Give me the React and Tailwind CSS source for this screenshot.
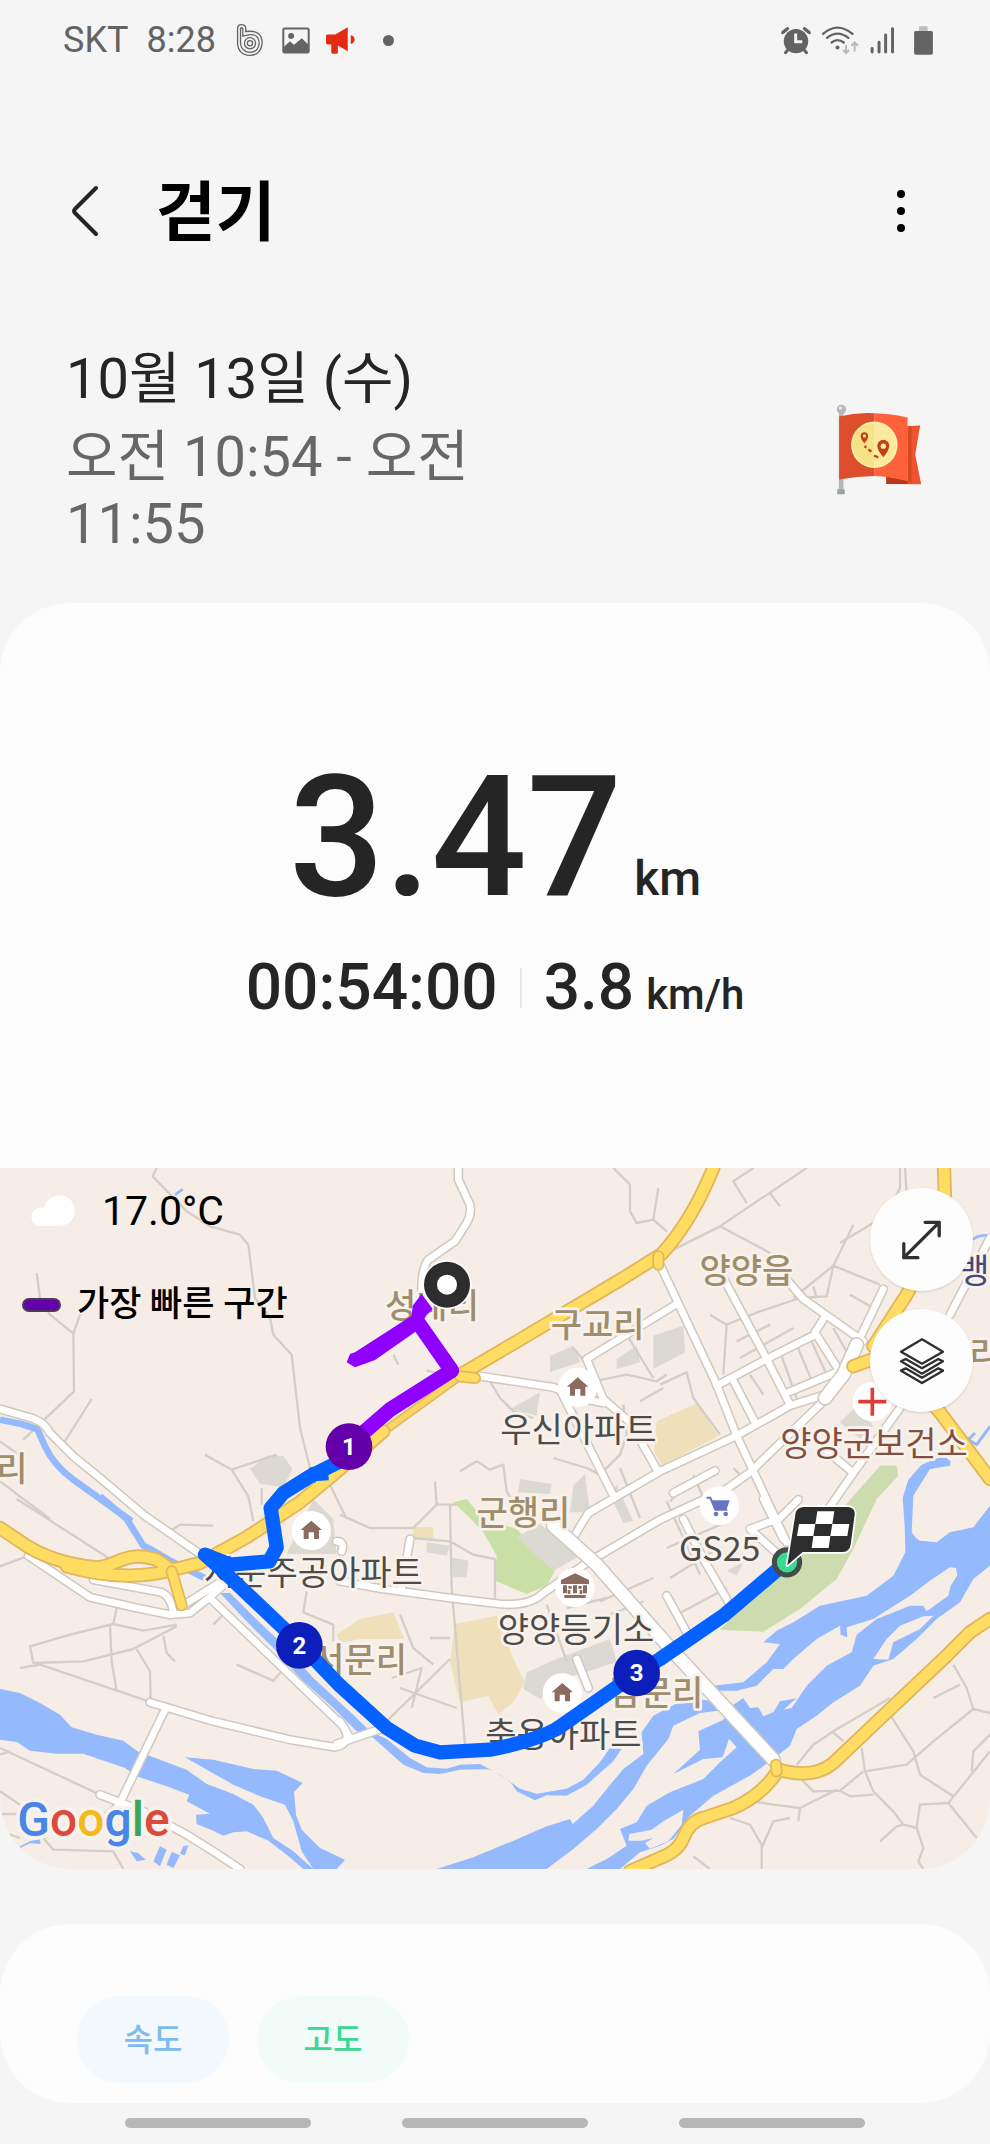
import React from 'react';

const WATER = [
  'M0 1563L60 1575 120 1605 180 1640 215 1678 290 1700 370 1718 412 1750 480 1775 560 1805 620 1848 700 1878 760 1910 790 1950 820 2010 880 2050 940 2103H910L860 2060 805 2018 740 1990 700 1993 670 2003 640 1988 590 1968 588 1940 630 1937 560 1900 568 1880 500 1855 410 1825 375 1800 250 1757 170 1757 90 1748 50 1722 0 1715Z',
  'M555 1768L640 1775 760 1803 830 1808 908 1845 882 1872 888 1940 905 1985 960 2040 1035 2075 1010 2103H940L905 2050 880 1960 855 1910 780 1885 700 1850 620 1805Z',
  'M660 1275L690 1275 760 1345 860 1440 940 1530 1060 1640 1110 1690 1160 1713 1230 1770 1280 1798 1340 1802 1380 1790 1440 1788 1500 1820 1560 1862 1610 1877 1700 1862 1750 1835 1800 1783 1840 1725 1900 1690 1840 1780 1760 1850 1700 1883 1640 1882 1605 1897 1550 1870 1530 1840 1470 1803 1380 1805 1320 1818 1270 1815 1210 1790 1120 1710 1070 1690 1000 1620 900 1530 820 1440 730 1350Z',
  'M1310 2103L1420 2068 1540 2018 1640 1975 1710 1953 1718 1968 1780 1913 1820 1863 1870 1803 1930 1758 1925 1693 1960 1643 2060 1590 2150 1600 2200 1622 2100 1635 2020 1673 2005 1713 1940 1793 1900 1863 1850 1923 1790 1983 1720 2043 1640 2103Z',
  'M1760 2103L1820 2073 1880 2033 1860 1983 1910 1963 1940 1913 2010 1873 2110 1833 2160 1783 2210 1738 2187 1712 2168 1768 2110 1773 2020 1818 2100 1745 2095 1690 2170 1655 2200 1610 2230 1590 2250 1620 2275 1618 2290 1645 2320 1633 2340 1600 2390 1591 2350 1625 2375 1620 2420 1553 2480 1493 2555 1453 2570 1400 2630 1353 2730 1313 2770 1313 2780 1330 2845 1283 2852 1253 2872 1222 2868 1200 2850 1198 2790 1238 2730 1283 2620 1353 2540 1378 2542 1408 2522 1400 2520 1373 2450 1413 2380 1473 2350 1503 2320 1503 2270 1553 2210 1568 2140 1568V1553L2230 1543 2300 1483 2340 1428 2290 1423 2330 1388 2380 1363 2460 1313 2600 1283 2680 1223 2716 1153 2714 1073 2708 990 2725 935 2765 890 2830 863 2852 880 2850 893 2790 903 2740 983 2735 1093 2748 1110 2760 1118 2810 1123 2850 1093 2920 1078 2970 1013V1193L2920 1233 2880 1303 2810 1353 2750 1413 2680 1473 2620 1493 2580 1553 2500 1603 2450 1643 2390 1683 2370 1733 2320 1773 2250 1823 2140 1883 2070 1943 2020 2013 1980 2033 1920 2053 1860 2103Z',
  'M60 2035L90 2020 120 2012 122 2028 90 2026 60 2040Z',
  'M390 2050L415 2055 437 2075 410 2080Z',
  'M480 2035L500 2045 480 2095 460 2080ZM500 2090L515 2052 540 2062 520 2100ZM550 2035L565 2032 555 2062 540 2058Z',
];

const ISLANDS = [
  'M2620 1473L2660 1413 2700 1373 2770 1345 2800 1343 2760 1383 2680 1423 2665 1475Z',
  'M1885 2018L1888 1998 1955 1985 1990 1960 2050 1925 2045 1970 2005 2020 1950 2042 1935 2025 1960 2010 1925 2018Z',
];

const AREAS = [
  { color: '#cddcae', d: 'M2500 1053L2640 893H2690L2695 923 2630 993 2560 1143 2510 1233 2400 1323 2290 1391 2160 1385 2330 1220Z' },
  { color: '#c8dfa6', d: 'M1360 1003L1400 993 1450 1053 1550 1083 1665 1208 1640 1253 1580 1278 1485 1238 1490 1163 1450 1093 1410 1050Z' },
  { color: '#efdfba', d: 'M1970 760L2090 706 2155 805 1985 893 1962 850Z' },
  { color: '#efdfba', d: 'M1365 1368L1490 1343 1540 1473 1575 1543 1540 1603 1495 1640 1465 1583 1380 1603 1350 1483Z' },
  { color: '#efdfba', d: 'M1010 1400L1080 1353 1180 1333 1212 1413 1080 1413 1020 1425Z' },
  { color: '#efdfba', d: 'M1242 1077L1300 1078V1118L1235 1113Z' },
  { color: '#dcd9d3', d: 'M750 903L800 863H850L877 903 850 958 780 948Z' },
  { color: '#dcd9d3', d: 'M940 993L1000 1053 1010 1158 860 1158Z' },
  { color: '#dcd9d3', d: 'M1650 563L1720 533 1740 583 1650 613ZM1530 723L1620 673 1610 743ZM1960 503L2050 473 2055 553 1960 603ZM1850 573L1910 533 1920 583 1850 603ZM1560 933L1655 948 1650 978 1555 973ZM1720 953L1755 918 1770 1033H1710Z' },
  { color: '#dcd9d3', d: 'M2520 763L2570 713 2620 773 2580 813ZM1550 1108L1620 1068 1740 1163 1660 1208ZM1580 1513L1670 1473 1830 1413 1850 1483 1720 1523 1620 1593 1570 1563ZM1280 1123L1350 1133 1340 1163 1280 1153ZM1350 1168L1405 1178 1400 1228 1360 1228ZM2180 1208L2230 1183 2210 1223ZM1850 950L1900 1060 1870 1065 1830 980Z' },
];

const LANES = [
  'M470 0L458 25 560 130 630 175 720 200 745 230 760 350 765 390 810 450 820 500 875 560 900 780 930 900',
  'M110 315L120 390 150 440 220 497 222 670 70 815M220 497L240 440M275 693L185 835M0 820L70 870M0 940L150 1053',
  'M615 860L695 905 830 860M695 905L745 985 760 1060M785 960L785 1010M990 950L1040 1053',
  'M50 993L330 1173M0 1195L80 1165M510 1090L540 1070 640 1073',
  'M350 1320L340 1368 430 1388 530 1370M340 1368L210 1400 90 1435 100 1485 250 1480 400 1443 530 1375M330 1370L335 1480 350 1570M410 1443L450 1510 452 1593M490 1403L500 1455 525 1480M60 1500L120 1490 440 1598',
  'M0 1740L300 1880M0 1760L30 1750M0 1870L60 1910M0 1938H60M130 2010L160 2045 340 2050 370 2103M0 1990L60 2010',
  'M710 1490L820 1538 845 1510M640 1370L670 1340M920 1270L910 1333 1000 1370 1000 1420',
  'M1840 0L1890 50 1890 130 1910 165 1960 155 1975 60M1960 155L2000 190M1180 560L1195 590M1280 607L1400 640M1470 640L1500 690 1540 730 1600 750',
  'M1380 910L1430 880 1470 905 1510 890 1520 970 1560 1040M1020 1040L1110 1080 1240 1080 1310 1010 1370 1010M1305 940L1310 1010M1350 1010L1355 1260 1395 1730M1240 1110L1350 1120 1420 1160 1485 1173 1485 1293M1290 1410L1350 1410M1160 1660L1350 1473M1200 1340L1240 1440 1300 1490M1200 1560L1370 1620M1175 1530L1265 1500 1235 1620M1660 870L1760 900 1800 920 1860 860 1880 800 1870 710',
  'M1780 640L1880 620 1970 640 2000 620M1880 500L1960 630M1920 700L1990 660M1860 900L1920 1050M2000 1000L2100 1220M1720 540L1760 590',
  'M2020 245L2160 175 2420 0M2260 0L2200 40 2240 105M2160 175L2320 260M2310 75L2340 115M2700 0L2700 60 2660 140 2520 225M2715 0L2720 80M2500 293L2560 170',
  'M2380 390L2500 293 2640 350M2500 293L2480 385 2400 390 2280 430 2180 470 2130 440M2180 470L2170 620M2210 520L2310 470M2220 570L2380 480M2550 380L2620 420M2440 355L2450 390M2250 620L2290 680M2340 550L2390 690M2390 530L2440 650M2430 510L2480 620M2500 480L2550 570',
  'M1980 650L2060 613 2080 690 2160 800M2010 1000L2060 950M2080 920L2110 990M2200 900L2230 930M2000 1140L2200 1053M2010 1230L2140 1150M2030 1340L2180 1260M1800 1300L1960 1230M1700 1320L1820 1290M1830 1340L1930 1300M1640 1310L1700 1480',
  'M2390 1790L2440 1730 2500 1690 2670 1590M2500 1693L2530 1720M2585 1740L2595 1810 2720 1790 2800 1720 2920 1623 2970 1635M2400 1830L2440 1870 2520 1868 2590 1810M2595 1810L2620 1870 2680 1930 2710 1970 2690 1975 2640 2020M2710 1970L2750 1980 2760 1910 2845 1905 2970 1750M2520 1868L2550 1885 2620 1880M2670 1640L2740 1750 2760 1820 2860 1885M2845 1905L2930 2010',
  'M2260 1900L2320 1910 2400 1920 2510 1865M2190 1950L2250 1970 2285 2030V2103M2370 1950L2320 1960 2285 2040M2860 1490L2900 1560 2920 1623M2800 1590L2880 1550M2750 1980L2770 2040 2755 2080 2770 2103M2970 1700L2920 1750 2915 1810M2080 2065L2130 2103M2400 1920L2395 1960',
];

const STREETS = [
  'M0 723L100 752Q135 765 150 795L220 865 300 930 430 1040 600 1158 690 1205',
  'M85 1163L270 1288 400 1318 510 1340 570 1335 620 1295 690 1235',
  'M280 1235L480 1272Q510 1280 518 1325M555 1308L660 1243',
  'M630 1290L1030 1675Q1060 1725 1005 1738L870 1715 640 1660 450 1603M495 1625L355 1915 320 1945',
  'M300 1880L430 1930 560 2000 640 2050 720 2103',
  'M1010 1728L1150 1680M1020 1660L1050 1710',
  'M1375 0V35L1410 110Q1415 140 1400 165L1365 220 1285 275Q1265 300 1265 370',
  'M1430 623L1660 658 1740 690 1810 705M1680 665L1840 983',
  'M1980 290L2150 650 2210 803 2360 1123M2030 408L1760 573 1810 693 1890 763 1970 903',
  'M1725 1100L1765 1035 1980 910 2210 803 2370 713 2490 675',
  'M2170 330L2300 573 2370 710M2360 335L2410 393 2590 520M2470 453L2445 493 2520 613M2150 653L2300 573 2445 500M2200 638L2265 763M2360 675L2515 610',
  'M2650 363L2530 613M2480 690L2250 913 2180 963 1980 1055 1760 1185 1630 1275Q1590 1315 1500 1308L1350 1290 1150 1263 1020 1240',
  'M2050 1053L2110 1173 2190 1310M2000 1283L2060 1393M2290 993L2350 1113M2250 1083L2350 1173M2250 1083L2340 1050 2395 995',
  'M2470 840L2560 915 2480 1030M2560 915L2700 720M2970 210L2850 440M2020 975L2145 908M1230 1113L1205 1260M1730 1473L1765 1560M1010 1120Q1035 1120 1025 1150',
];

const HIGHWAYS = [
  'M0 1080L60 1120Q150 1185 290 1198C350 1195 380 1145 470 1175L520 1210',
  'M200 1195Q380 1245 520 1205L600 1185 740 1108 900 1003 1020 903 1150 790',
  'M1390 615L1560 515 1870 330 1985 258Q2075 160 2140 0',
  'M2832 0L2835 93 2790 250 2720 380 2620 535M2560 595L2620 573 2700 600 2820 733 2970 933',
  'M1890 2110L1980 2070Q2035 2050 2050 2010 2070 1960 2110 1950L2200 1920Q2290 1880 2335 1805 2440 1835 2500 1785L2660 1633 2840 1463 2910 1393 2970 1353',
];

const PLACES = [
  { name: '성내리', x: 1296, y: 450, kind: 'district' },
  { name: '구교리', x: 1793, y: 508, kind: 'district' },
  { name: '양양읍', x: 2239, y: 345, kind: 'district' },
  { name: '군행리', x: 1570, y: 1070, kind: 'district' },
  { name: '서문리', x: 1080, y: 1513, kind: 'district' },
  { name: '남문리', x: 1969, y: 1610, kind: 'district' },
  { name: '리', x: 36, y: 940, kind: 'district' },
  { name: '리', x: 2955, y: 595, kind: 'district' },
  { name: '우신아파트', x: 1735, y: 823, kind: 'poi' },
  { name: '서문주공아파트', x: 940, y: 1250, kind: 'poi' },
  { name: '양양등기소', x: 1728, y: 1422, kind: 'poi' },
  { name: '축용아파트', x: 1690, y: 1738, kind: 'poi' },
  { name: 'GS25', x: 2159, y: 1178, kind: 'poi' },
  { name: '양양군보건소', x: 2622, y: 865, kind: 'clinic' },
  { name: '뱅', x: 2922, y: 345, kind: 'bank' },
];

const PLACE_STYLES = {
  district: 'fill-[#a08d6c] text-[102px] font-medium',
  poi: 'fill-[#4f4b48] text-[102px]',
  clinic: 'fill-[#83503f] text-[102px]',
  bank: 'fill-[#454779] text-[102px]',
};

const KM_MARKERS = [
  { label: '1', x: 1047, y: 836, color: '#6400aa' },
  { label: '2', x: 898, y: 1432, color: '#0c1fba' },
  { label: '3', x: 1910, y: 1515, color: '#0c1fba' },
];

const GOOGLE = [
  ['G', '#4a86e8'],
  ['o', '#dc4a3d'],
  ['o', '#f4b91a'],
  ['g', '#4a86e8'],
  ['l', '#3aa757'],
  ['e', '#dc4a3d'],
];

function Roads({ paths, casing, fill, outer, inner }) {
  return (
    <g fill="none" strokeLinecap="round" strokeLinejoin="round">
      {paths.map((d) => <path key={d} d={d} stroke={casing} strokeWidth={outer} />)}
      {paths.map((d) => <path key={d} d={d} stroke={fill} strokeWidth={inner} />)}
    </g>
  );
}

function HomePin({ x, y }) {
  return (
    <g transform={`translate(${x} ${y})`}>
      <circle r="59" fill="#fff" />
      <path d="M0 -30L32 -2H23V25H8V5H-8V25H-23V-2H-32Z" fill="#8b6a60" />
    </g>
  );
}

function RouteMap() {
  return (
    <svg viewBox="0 0 2970 2103" className="block h-auto w-full bg-[#f6ede7] font-['Noto_Sans_CJK_KR',sans-serif]" role="img" aria-label="걷기 경로 지도">
      {AREAS.map((a) => <path key={a.d} d={a.d} fill={a.color} />)}
      <g fill="none" stroke="#d3cec7" strokeWidth="7" strokeLinejoin="round">
        {LANES.map((d) => <path key={d} d={d} />)}
      </g>
      <g fill="#94bafd">
        {WATER.map((d) => <path key={d} d={d} />)}
      </g>
      <g fill="none" stroke="#94bafd" strokeLinejoin="round">
        <path d="M0 755L60 767 112 783 135 835Q160 890 220 935L395 1060" strokeWidth="20" />
        <path d="M300 985L380 1053 430 1133 450 1143 510 1178 590 1218 625 1235" strokeWidth="20" />
        <path d="M525 80L548 64M2910 220Q2940 195 2970 205M2690 430L2725 385" strokeWidth="8" />
        <path d="M2970 775L2930 830 2905 815 2925 795" strokeWidth="9" />
      </g>
      <g fill="#f6ede7">
        {ISLANDS.map((d) => <path key={d} d={d} />)}
      </g>

      <Roads paths={STREETS} casing="#cdc9c1" fill="#fff" outer={29} inner={20} />
      <Roads paths={['M1660 1073L1790 1190 2010 1440 2320 1775', 'M2570 530L2530 620 2475 690']} casing="#cdc9c1" fill="#fff" outer={46} inner={37} />
      <Roads paths={['M1120 813L1390 618']} casing="#e2b65c" fill="#fbd466" outer={26} inner={16} />
      <Roads paths={HIGHWAYS} casing="#e2b65c" fill="#fedd62" outer={43} inner={32} />
      <Roads paths={['M515 1210L545 1312', 'M1975 265L1975 290', 'M1380 625L1425 630', 'M2328 1790L2330 1810']} casing="#e2b65c" fill="#fedd62" outer={36} inner={26} />

      <HomePin x={1733} y={658} />
      <HomePin x={934} y={1088} />
      <HomePin x={1687} y={1575} />
      <g transform="translate(1725 1258)">
        <circle r="59" fill="#fff" />
        <path d="M0 -42L42 -22V-10H-42V-22ZM-36 -6H-24V18H-36ZM24 -6H36V18H24ZM-6 -6H6V18H-6ZM-20 -4H-10V4H-20ZM10 -4H20V4H10ZM-32 23H32V32H-32Z" fill="#8b6a60" />
        <path d="M-18 8V20M18 8V20" stroke="#8b6a60" strokeWidth="8" />
      </g>
      <g transform="translate(2158 1013)">
        <circle r="59" fill="#fff" />
        <path d="M-38 -24H-27L-12 12H24" fill="none" stroke="#6874c4" strokeWidth="6" />
        <path d="M-26 -16H31L22 10H-14Z" fill="#6874c4" />
        <circle cx="-10" cy="25" r="7" fill="#6874c4" />
        <circle cx="19" cy="25" r="7" fill="#6874c4" />
      </g>
      <g transform="translate(2617 701)">
        <circle r="59" fill="#fff" />
        <path d="M0 -42V42M-42 0H42" stroke="#dc3d38" strokeWidth="11" />
      </g>

      <g textAnchor="middle" stroke="#f8f2ed" strokeWidth="16" strokeLinejoin="round" paintOrder="stroke">
        {PLACES.map((p) => (
          <text key={`${p.name}${p.x}`} x={p.x} y={p.y} className={PLACE_STYLES[p.kind]}>{p.name}</text>
        ))}
      </g>

      <path d="M985 915L940 918 955 925M1020 880L930 925 850 975 812 1020 830 1138 808 1180 690 1190 615 1160 655 1195 895 1423 1020 1553 1160 1680 1245 1733 1320 1753 1470 1745Q1600 1720 1670 1683L1900 1523 1980 1473 2170 1343 2350 1190" fill="none" stroke="#0561ff" strokeWidth="43" strokeLinejoin="round" />
      <path d="M1255 465L1355 608 1170 725 1060 820" fill="none" stroke="#8f00ff" strokeWidth="45" strokeLinejoin="round" />
      <path d="M1040 583L1050 558 1065 553 1235 443 1238 413 1265 378 1298 423 1278 443 1255 485 1125 576 1065 598Z" fill="#8f00ff" />

      {KM_MARKERS.map((m) => (
        <g key={m.label}>
          <circle cx={m.x} cy={m.y} r="70" fill={m.color} />
          <text x={m.x} y={m.y + 25} textAnchor="middle" className="fill-white font-['Roboto',sans-serif] text-[72px] font-bold">{m.label}</text>
        </g>
      ))}

      <circle cx="1341" cy="350" r="74" fill="#fff" />
      <circle cx="1341" cy="350" r="69" fill="#2d2d2d" />
      <circle cx="1341" cy="350" r="30" fill="#fff" />

      <circle cx="2361" cy="1183" r="38" fill="#37dc8e" stroke="#454b49" strokeWidth="15" />
      <path d="M2410 1017H2545Q2566 1019 2564 1040L2552 1130Q2548 1152 2526 1152H2408L2362 1192 2386 1040Q2388 1019 2410 1017Z" fill="#2d2d2d" stroke="#fff" strokeWidth="10" strokeLinejoin="round" paintOrder="stroke" />
      <path d="M2452 1030H2503L2497 1068H2446ZM2397 1068H2446L2440 1104H2391ZM2497 1068H2548L2542 1104H2491ZM2440 1104H2491L2486 1140H2435Z" fill="#fff" />

      <text x="52" y="2003" stroke="#f8f2ed" strokeWidth="22" strokeLinejoin="round" paintOrder="stroke" className="font-['Roboto',sans-serif] text-[144px] font-medium">
        {GOOGLE.map(([letter, color], i) => <tspan key={i} fill={color}>{letter}</tspan>)}
      </text>
    </svg>
  );
}

function StatusBar() {
  return (
    <div className="flex h-20 items-center justify-between pr-[57px] pl-[63px] text-[#636363]">
      <div className="flex items-center">
        <span className="text-[36px]">SKT</span>
        <span className="ml-[18px] text-[36px]">8:28</span>
        <svg viewBox="704 66 84 104" className="ml-5 h-[34px] w-7" fill="none" stroke="currentColor" strokeWidth="4">
          <path d="M708 128V82Q708 71 720 71T733 82V92Q784 86 783 128 780 164 746 165 710 164 708 128Z" />
          <path d="M717 128V83Q720 78 724 83V106Q772 90 774 128 772 155 746 156 719 154 717 128Z" />
          <circle cx="746" cy="128" r="17" />
          <circle cx="746" cy="128" r="8" />
        </svg>
        <svg viewBox="838 78 86 82" className="ml-[18px] h-[27px] w-7">
          <rect x="842" y="82" width="78" height="74" rx="3" fill="none" stroke="currentColor" strokeWidth="6" />
          <circle cx="866" cy="105" r="9" fill="currentColor" />
          <path d="M843 140L862 121 875 132 899 112 919 132V156H843Z" fill="currentColor" />
        </svg>
        <svg viewBox="972 78 88 82" className="ml-4 h-[27px] w-[29px] fill-[#e22b12]">
          <path d="M972 105Q972 101 977 101H1000L1038 79V152L1008 134V156Q1008 159 1004 159H992Q988 159 988 155V131H977Q972 131 972 126ZM1047 102Q1059 106 1059 116T1047 130Z" />
        </svg>
        <span className="ml-7 size-[11px] rounded-full bg-[#636363]" />
      </div>
      <div className="flex items-center gap-[11px]">
        <svg viewBox="860 74 90 88" className="h-[29px] w-[30px]">
          <circle cx="905" cy="120" r="37" fill="currentColor" />
          <path d="M865 94L879 82M931 82L945 94" stroke="currentColor" strokeWidth="10" strokeLinecap="round" />
          <path d="M880 147L873 155M930 147L937 155" stroke="currentColor" strokeWidth="9" strokeLinecap="round" />
          <path d="M904 97V122H924" fill="none" stroke="#f5f5f5" strokeWidth="9" />
        </svg>
        <svg viewBox="984 74 112 88" className="h-[29px] w-[37px]" fill="none">
          <path d="M987 98Q1031 60 1076 98M999 110Q1031 84 1064 110M1013 124Q1031 110 1050 124" stroke="currentColor" strokeWidth="7" strokeLinecap="round" />
          <circle cx="1031" cy="139" r="6" fill="currentColor" />
          <path d="M1057 132V155M1048 147L1057 156 1066 147M1083 151V126M1073 134L1083 124 1093 134" stroke="#b9b9b9" strokeWidth="6" />
        </svg>
        <svg viewBox="1125 80 75 82" className="h-[27px] w-[25px]">
          <path d="M1131 145V156M1152 126V156M1172 104V156M1193 85V156" stroke="currentColor" strokeWidth="9" strokeLinecap="round" />
        </svg>
        <svg viewBox="1256 74 57 88" className="ml-2 h-[29px] w-[19px]">
          <rect x="1271" y="75" width="26" height="16" rx="3" fill="#bdbdbd" />
          <rect x="1256" y="89" width="57" height="72" rx="5" fill="currentColor" />
        </svg>
      </div>
    </div>
  );
}

function RouteFlag() {
  return (
    <svg viewBox="165 100 258 274" className="h-[91px] w-[86px] shrink-0">
      <rect x="173" y="125" width="14" height="240" fill="#b4b8ba" />
      <rect x="168" y="357" width="23" height="15" rx="2" fill="#9da2a5" />
      <circle cx="181" cy="116" r="14" fill="#b4b8ba" />
      <circle cx="178" cy="112" r="5" fill="#e2e5e6" />
      <path d="M380 167L418 165 403 252 421 342 316 341V318L380 330Z" fill="#f0532f" />
      <path d="M380 167L392 166V340L380 332Z" fill="#d9481f" />
      <path d="M316 318L380 331V341H316Z" fill="#b53a1b" />
      <path d="M174 138Q228 124 281 128V317Q228 318 174 327Z" fill="#dd4e2c" />
      <path d="M281 128Q330 129 380 141V332Q330 318 281 317Z" fill="#ff613b" />
      <circle cx="280" cy="223" r="70" fill="#fff3b4" />
      <path d="M280 157A66 66 0 0 0 280 289Z" fill="#f6e287" />
      <path d="M280 157A66 66 0 0 1 280 289Z" fill="#fdea9c" />
      <path d="M250 218Q238 205 239 196A11 11 0 0 1 261 196Q262 205 250 218ZM307 260Q289 240 289 226A18 18 0 0 1 325 226Q325 240 307 260Z" fill="#c43f1c" />
      <circle cx="250" cy="196" r="5" fill="#fbe795" />
      <circle cx="307" cy="227" r="8" fill="#fdea9c" />
      <path d="M250 227L256 231M262 237L271 243M279 255L292 261" stroke="#c43f1c" strokeWidth="7" />
    </svg>
  );
}

export default function App() {
  return (
    <div className="bg-[#f5f5f5] font-['Roboto','Noto_Sans_CJK_KR',sans-serif] text-[#252525]">
      <StatusBar />

      <header className="mt-[78px] flex h-[106px] items-center justify-between pr-[69px] pl-[70px]">
        <div className="flex items-center gap-14">
          <button type="button" aria-label="뒤로">
            <svg viewBox="0 0 30 52" className="h-[52px] w-[30px]" fill="none" stroke="currentColor" strokeWidth="4" strokeLinecap="round" strokeLinejoin="round">
              <path d="M26 3L5 24Q3 26 5 28L26 49" />
            </svg>
          </button>
          <h1 className="pt-1 text-[65px] leading-none font-bold text-black">걷기</h1>
        </div>
        <button type="button" aria-label="더보기" className="flex w-10 flex-col items-center gap-[9px]">
          <span className="size-2 rounded-full bg-black" />
          <span className="size-2 rounded-full bg-black" />
          <span className="size-2 rounded-full bg-black" />
        </button>
      </header>

      <section className="mt-[76px] flex items-center justify-between pr-[68px] pb-[45px] pl-[66px]">
        <div className="w-[420px] text-[56px]">
          <p className="leading-[78px]">10월 13일 (수)</p>
          <p className="mt-1.5 leading-[67px] text-[#676767]">오전 10:54 - 오전 11:55</p>
        </div>
        <RouteFlag />
      </section>

      <main>
        <section className="overflow-hidden rounded-[70px] bg-[#fcfcfc]">
          <div className="flex flex-col items-center pt-[151px] pb-[148px] font-medium">
            <p className="flex items-baseline gap-3 text-[168px] leading-none">
              3.47 <span className="text-[48px] leading-none">km</span>
            </p>
            <div className="mt-[34px] flex items-center gap-[22px] text-[64px] leading-none">
              <p>00:54:00</p>
              <span className="h-10 w-0.5 bg-[#e6e6e6]" />
              <p className="flex items-baseline gap-3">
                3.8 <span className="text-[42px] leading-none">km/h</span>
              </p>
            </div>
          </div>

          <div className="relative text-black">
            <RouteMap />
            <div className="absolute top-[19px] left-[22px]">
              <div className="flex items-center pl-1.5">
                <svg viewBox="88 110 142 96" className="h-8 w-[47px]">
                  <path d="M118 205A30 30 0 1 1 136 147A48 48 0 1 1 182 205Z" fill="#fff" stroke="#ece7e3" strokeWidth="2" />
                </svg>
                <p className="ml-[27px] text-[41px] leading-12">17.0°C</p>
              </div>
              <div className="mt-[46px] flex items-center gap-4">
                <span className="h-[14px] w-[39px] rounded-full border-2 border-[#4b3a59] bg-[#6400aa]" />
                <p className="text-[35px] leading-12 font-medium">가장 빠른 구간</p>
              </div>
            </div>
            <div className="absolute top-5 right-[17px] flex flex-col gap-[18px]">
              <button type="button" aria-label="지도 확대" className="flex size-[103px] items-center justify-center rounded-full bg-[#fdfdfd] text-[#2f2f2f] shadow-sm">
                <svg viewBox="722 180 124 122" className="h-10 w-[41px]" fill="none" stroke="currentColor" strokeWidth="10" strokeLinecap="round" strokeLinejoin="round">
                  <path d="M730 295L838 187M795 187H838V228M730 252V295H773" />
                </svg>
              </button>
              <button type="button" aria-label="지도 유형" className="flex size-[103px] items-center justify-center rounded-full bg-[#fdfdfd] text-[#2f2f2f] shadow-sm">
                <svg viewBox="716 531 138 144" className="h-12 w-[46px]" fill="none" stroke="currentColor" strokeWidth="7" strokeLinejoin="round">
                  <path d="M785 538L848 575 785 611 722 575Z" />
                  <path d="M736 597L722 604 785 641 848 604 834 597 785 625Z" />
                  <path d="M736 625L722 632 785 669 848 632 834 625 785 653Z" />
                </svg>
              </button>
            </div>
          </div>
        </section>

        <section className="mt-[55px] flex gap-7 rounded-[70px] bg-[#fcfcfc] px-[77px] pt-[72px] pb-5">
          <button type="button" className="h-[87px] w-[152px] rounded-full bg-[#f3f8fc] text-[32px] font-medium text-[#7dbcee]">속도</button>
          <button type="button" className="h-[87px] w-[152px] rounded-full bg-[#f1fcf8] text-[32px] font-medium text-[#3bd795]">고도</button>
        </section>
      </main>

      <nav className="flex justify-center gap-[91px] pt-[15px] pb-4">
        <button type="button" aria-label="최근 앱" className="h-[10px] w-[186px] rounded-full bg-[#b7b7b7]" />
        <button type="button" aria-label="홈" className="h-[10px] w-[186px] rounded-full bg-[#b7b7b7]" />
        <button type="button" aria-label="이전" className="h-[10px] w-[186px] rounded-full bg-[#b7b7b7]" />
      </nav>
    </div>
  );
}
